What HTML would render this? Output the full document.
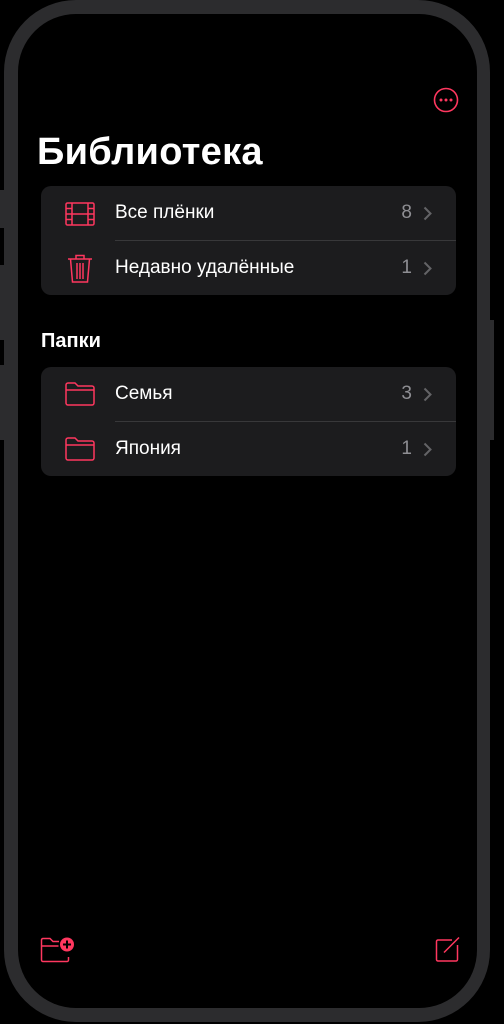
<!DOCTYPE html>
<html><head><meta charset="utf-8"><style>
body{margin:0;width:504px;height:1024px;background:#000;position:relative;overflow:hidden;font-family:"Liberation Sans","DejaVu Sans",sans-serif;color:#fff}
.frame{position:absolute;left:4px;top:0;width:486px;height:1022px;background:#2c2c2e;border-radius:72px}
.screen{position:absolute;left:18px;top:14px;width:459px;height:994px;background:#000;border-radius:58px}
.btn{position:absolute;background:#2c2c2e;width:5px}
.t{position:absolute;left:37px;top:131px;font-size:38px;font-weight:bold;letter-spacing:0.3px}
.h{position:absolute;left:41px;top:330px;font-size:20px;font-weight:bold}
.card{position:absolute;left:41px;width:415px;height:109px;background:#1c1c1e;border-radius:10px}
.sep{position:absolute;left:74px;right:0;top:54px;height:1px;background:#38383a}
.row{position:absolute;left:0;right:0;height:55px}
.lab{position:absolute;left:74px;top:16px;font-size:19px;color:#fff}
.cnt{position:absolute;right:44px;top:16px;font-size:19px;color:#8e8e93}
.chev{position:absolute;right:24px;top:20px}
.ic{position:absolute;left:24px;top:14px}
</style></head><body>
<div class="btn" style="left:0;top:190px;height:38px"></div>
<div class="btn" style="left:0;top:265px;height:75px"></div>
<div class="btn" style="left:0;top:365px;height:75px"></div>
<div class="btn" style="left:489px;top:320px;height:120px"></div>
<div class="frame"></div>
<div class="screen"></div>
<svg style="position:absolute;left:433px;top:87px" width="26" height="26"><circle cx="13" cy="13" r="11.5" fill="none" stroke="#ff375f" stroke-width="1.6"/><circle cx="8" cy="13" r="1.5" fill="#ff375f"/><circle cx="13" cy="13" r="1.5" fill="#ff375f"/><circle cx="18" cy="13" r="1.5" fill="#ff375f"/></svg>
<div class="t">Библиотека</div>
<div class="card" style="top:186px">
 <div class="row" style="top:0">
  <svg class="ic" width="32" height="28" viewBox="0 0 32 28"><g fill="none" stroke="#ff375f" stroke-width="1.5"><rect x="1" y="3" width="28" height="22" rx="1.5"/><line x1="7" y1="3" x2="7" y2="25"/><line x1="23" y1="3" x2="23" y2="25"/><line x1="7" y1="14" x2="23" y2="14"/><path d="M1 8.5h6M1 14h6M1 19.5h6M23 8.5h6M23 14h6M23 19.5h6"/></g></svg>
  <div class="lab">Все плёнки</div><div class="cnt">8</div>
  <svg class="chev" width="9" height="15"><path d="M1.5 1.5l6 6-6 6" fill="none" stroke="#636366" stroke-width="2"/></svg>
 </div>
 <div class="sep"></div>
 <div class="row" style="top:55px">
  <svg class="ic" style="top:12px;left:26px" width="26" height="32" viewBox="0 0 26 32"><g fill="none" stroke="#ff375f" stroke-width="1.5"><path d="M1 6h24M9 6V2.5h8V6"/><path d="M3.5 6l2 23h15l2-23"/><path d="M10 10v16M13 10v16M16 10v16"/></g></svg>
  <div class="lab">Недавно удалённые</div><div class="cnt">1</div>
  <svg class="chev" width="9" height="15"><path d="M1.5 1.5l6 6-6 6" fill="none" stroke="#636366" stroke-width="2"/></svg>
 </div>
</div>
<div class="h">Папки</div>
<div class="card" style="top:367px">
 <div class="row" style="top:0">
  <svg class="ic" style="top:15px" width="30" height="24" viewBox="0 0 30 24"><g fill="none" stroke="#ff375f" stroke-width="1.5"><path d="M1 3a2 2 0 0 1 2-2h7l3 3h14a2 2 0 0 1 2 2v15a2 2 0 0 1-2 2H3a2 2 0 0 1-2-2z"/><path d="M1 8h28"/></g></svg>
  <div class="lab">Семья</div><div class="cnt">3</div>
  <svg class="chev" width="9" height="15"><path d="M1.5 1.5l6 6-6 6" fill="none" stroke="#636366" stroke-width="2"/></svg>
 </div>
 <div class="sep"></div>
 <div class="row" style="top:55px">
  <svg class="ic" style="top:15px" width="30" height="24" viewBox="0 0 30 24"><g fill="none" stroke="#ff375f" stroke-width="1.5"><path d="M1 3a2 2 0 0 1 2-2h7l3 3h14a2 2 0 0 1 2 2v15a2 2 0 0 1-2 2H3a2 2 0 0 1-2-2z"/><path d="M1 8h28"/></g></svg>
  <div class="lab">Япония</div><div class="cnt">1</div>
  <svg class="chev" width="9" height="15"><path d="M1.5 1.5l6 6-6 6" fill="none" stroke="#636366" stroke-width="2"/></svg>
 </div>
</div>
<svg style="position:absolute;left:40px;top:937px" width="36" height="26" viewBox="0 0 36 26"><g fill="none" stroke="#ff375f" stroke-width="1.5"><path d="M1.5 3a1.5 1.5 0 0 1 1.5-1.5h7l3 3h6"/><path d="M1.5 3v20a1.5 1.5 0 0 0 1.5 1.5h24a1.5 1.5 0 0 0 1.5-1.5v-3"/><path d="M1.5 9h17"/></g><circle cx="27" cy="7.5" r="7" fill="#ff375f"/><path d="M27 3.5v8M23 7.5h8" stroke="#000" stroke-width="2"/></svg>
<svg style="position:absolute;left:435px;top:936px" width="26" height="26" viewBox="0 0 26 26"><g fill="none" stroke="#ff375f" stroke-width="1.5"><path d="M17 4H3a1.5 1.5 0 0 0-1.5 1.5v18A1.5 1.5 0 0 0 3 25h18a1.5 1.5 0 0 0 1.5-1.5V9"/><path d="M9 16.5L24 1.5"/></g></svg>
</body></html>
